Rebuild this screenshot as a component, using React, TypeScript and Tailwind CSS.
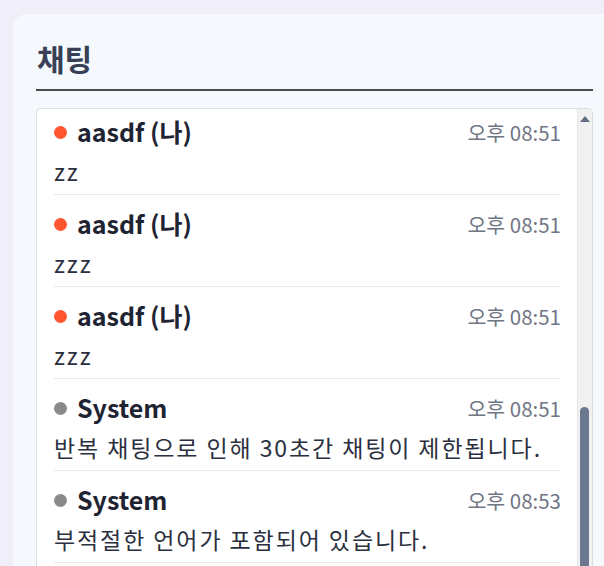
import React from "react";

type Msg = { name: string; me?: boolean; time: string; text: string };

const messages: Msg[] = [
  { name: "aasdf (나)", me: true, time: "오후 08:51", text: "zz" },
  { name: "aasdf (나)", me: true, time: "오후 08:51", text: "zzz" },
  { name: "aasdf (나)", me: true, time: "오후 08:51", text: "zzz" },
  { name: "System", time: "오후 08:51", text: "반복 채팅으로 인해 30초간 채팅이 제한됩니다." },
  { name: "System", time: "오후 08:53", text: "부적절한 언어가 포함되어 있습니다." },
  { name: "System", time: "오후 08:53", text: "부적절한 언어가 포함되어 있습니다." },
];

function ChatRow({ msg }: { msg: Msg }) {
  return (
    <div className="border-b border-[#e8e8ea] pt-[8px] pb-[5px]">
      <div className="flex h-[42px] items-center justify-between">
        <div className="flex items-center gap-[10px]">
          <span
            className={`h-[13px] w-[13px] rounded-full ${msg.me ? "bg-[#ff5630]" : "bg-[#8a8a8a]"}`}
          />
          <span className="text-[25px] font-bold text-[#1f2433]">{msg.name}</span>
        </div>
        <span className="text-[20.5px] text-[#707684]">{msg.time}</span>
      </div>
      <div className="flex h-[36px] items-center whitespace-nowrap text-[23px] tracking-[1.9px] text-[#2b3040]">
        {msg.text}
      </div>
    </div>
  );
}

export default function App() {
  return (
    <div
      className="h-[566px] w-[604px] overflow-hidden bg-[#f0eef8] pl-[13px] pt-[14px]"
      style={{ fontFamily: '"Noto Sans CJK KR", "Noto Sans", sans-serif' }}
    >
      <div className="h-[600px] w-[604px] rounded-tl-[14px] bg-[#f5f8fc] pl-[23px] pr-[24px] pt-[24px]">
        <h2 className="pl-[1px] text-[30px] font-bold leading-[40px] text-[#394055]">채팅</h2>
        <div className="mt-[11px] h-[2px] bg-[#4a4a4a]" />
        <div className="mt-[17px] flex h-[500px] overflow-hidden rounded-[5px] border border-[#dcdde0] bg-white">
          <div className="-mt-[6px] flex-1 pl-[17px] pr-[16px]">
            {messages.map((m, i) => (
              <ChatRow key={i} msg={m} />
            ))}
          </div>
          <div className="relative w-[15px] border-l border-[#e6e6e6] bg-[#f1f1f1]">
            <svg className="absolute left-[2px] top-[7px]" width="10" height="6" viewBox="0 0 10 6">
              <path d="M5 0 L10 6 L0 6 Z" fill="#5f6b7e" />
            </svg>
            <div className="absolute left-[2px] top-[298px] h-[300px] w-[9px] rounded-full bg-[#6b788f]" />
          </div>
        </div>
      </div>
    </div>
  );
}
